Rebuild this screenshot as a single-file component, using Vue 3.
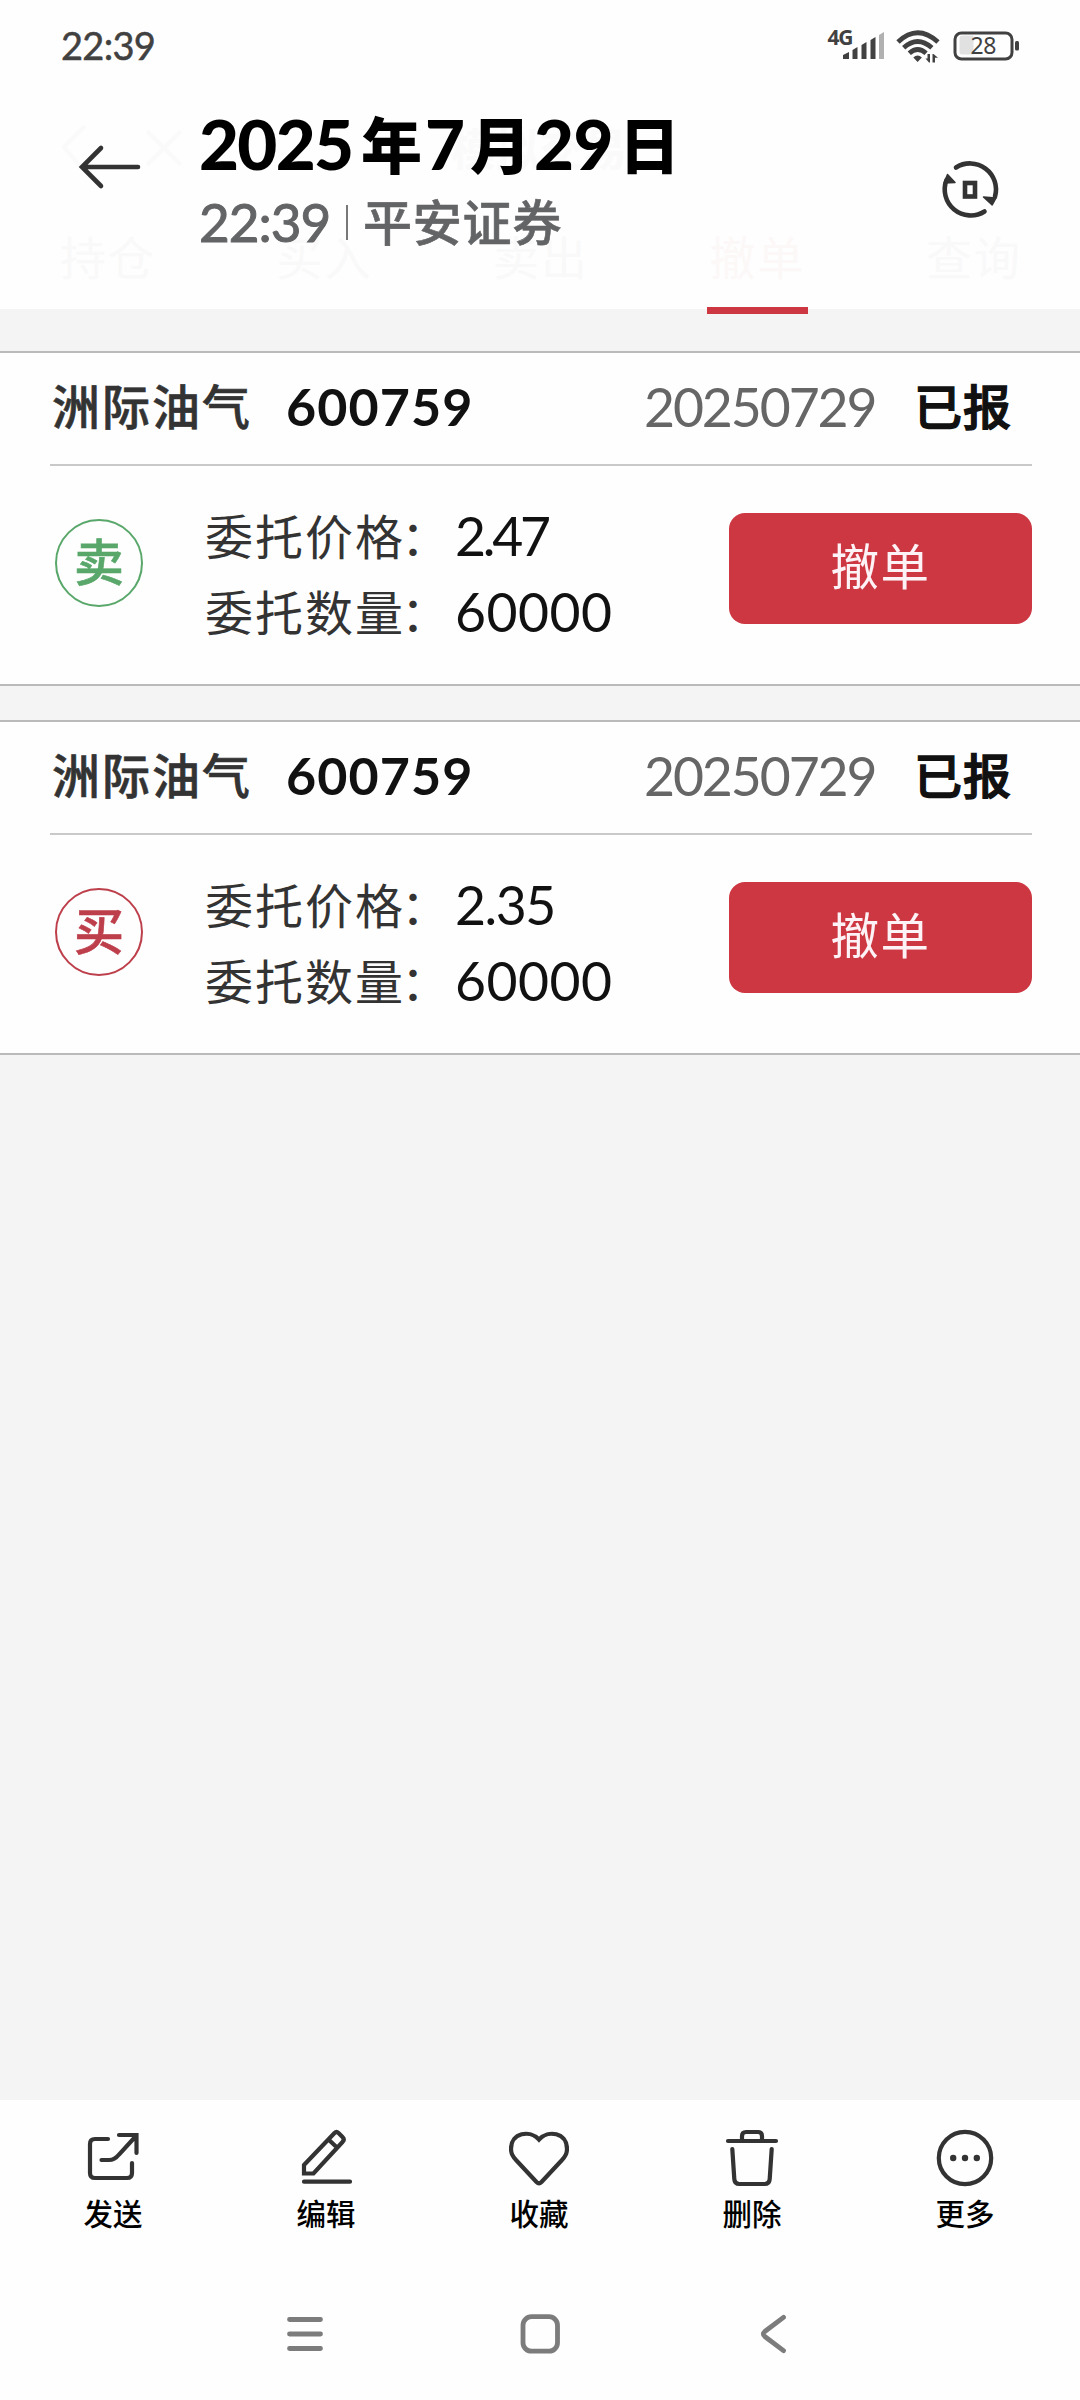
<script setup>
const tabs = ['持仓', '买入', '卖出', '撤单', '查询']
const activeTab = '撤单'

const orders = [
  { id: 1, name: '洲际油气', code: '600759', date: '20250729', status: '已报', side: '卖', kind: 'sell', price: '2.47', amount: '60000', tight: true },
  { id: 2, name: '洲际油气', code: '600759', date: '20250729', status: '已报', side: '买', kind: 'buy', price: '2.35', amount: '60000', tight: false },
]
</script>

<template>
  <div class="screen">
    <header class="app-head">
      <div class="app-bar faint">
        <svg class="app-nav" width="130" height="50" viewBox="0 0 130 50" fill="none" stroke="currentColor" stroke-width="4">
          <path d="M27 8 6 29 22 48M89 13l34 34M123 13 89 47" />
        </svg>
        <span class="app-title">模拟交易</span>
      </div>
      <nav class="tabs">
        <span v-for="t in tabs" :key="t" class="tab" :class="{ active: t === activeTab }">{{ t }}</span>
      </nav>
      <i class="underline"></i>
    </header>

    <main class="orders">
      <section v-for="o in orders" :key="o.id" class="card">
        <div class="card-head">
          <span class="name">{{ o.name }}</span>
          <span class="code">{{ o.code }}</span>
          <span class="date">{{ o.date }}</span>
          <span class="status">{{ o.status }}</span>
        </div>
        <div class="card-body">
          <div class="side" :class="o.kind">{{ o.side }}</div>
          <div class="rows">
            <div class="row">
              <span class="label">委托价格<span class="colon">：</span></span>
              <span class="value price" :class="{ tight: o.tight }">{{ o.price }}</span>
            </div>
            <div class="row">
              <span class="label">委托数量<span class="colon">：</span></span>
              <span class="value">{{ o.amount }}</span>
            </div>
          </div>
          <button class="cancel">撤单</button>
        </div>
      </section>
    </main>

    <footer class="bottom">
      <div class="tools">
        <div class="tool">
          <svg class="ico" viewBox="0 0 60 60">
            <path d="M25 11H12q-5 0-5 5v29q0 5 5 5h32q5 0 5-5V35" />
            <path d="M36 7h17.500v18M18.500 32H26c5 0 8-3 10-5.500L53 8" />
          </svg>
          <span>发送</span>
        </div>
        <div class="tool">
          <svg class="ico" viewBox="1 0 60 60">
            <path d="M9 37 39.500 5q2-2 4 0l4 4q2.500 2.500 0 5L18.500 45.500H9zM33.500 11.500l8.500 8M9 53.700h46" />
          </svg>
          <span>编辑</span>
        </div>
        <div class="tool">
          <svg class="ico" viewBox="0 0 60 60">
            <path d="M30 11.500C21 1.500 2 4.500 2 21c0 4 1.500 7.500 5 11l20.500 22q2.500 2.500 5 0L53 32c3.500-3.500 5-7 5-11C58 4.500 39 1.500 30 11.500z" />
          </svg>
          <span>收藏</span>
        </div>
        <div class="tool">
          <svg class="ico" viewBox="0.500 0 60 60">
            <path d="M6.500 13h48M20.500 12V8q0-4 4-4h12q4 0 4 4v4M10.800 21l2 30q.3 5 5 5h25.400q4.700 0 5-5l2-30" />
          </svg>
          <span>删除</span>
        </div>
        <div class="tool">
          <svg class="ico" viewBox="0 0 60 60">
            <circle cx="30" cy="30" r="26.200" />
            <g fill="#333" stroke="none">
              <circle cx="18.200" cy="30" r="3.200" />
              <circle cx="30" cy="30" r="3.200" />
              <circle cx="41.800" cy="30" r="3.200" />
            </g>
          </svg>
          <span>更多</span>
        </div>
      </div>
      <div class="sysnav">
        <svg viewBox="0 0 48 48"><path d="M8.500 9.500h31M8.500 24h31M8.500 38.500h31" /></svg>
        <svg viewBox="0 0 48 48"><rect x="7" y="6.700" width="34.500" height="34.500" rx="8.500" /></svg>
        <svg viewBox="0 0 48 48"><path d="M33.500 7.300 14.800 21.500q-3 2.500 0 5L33.500 40.700" /></svg>
      </div>
    </footer>

    <div class="overlay">
      <div class="statusbar">
        <span class="clock">22:39</span>
        <svg class="sys" width="205" height="50" viewBox="820 16 205 50">
          <text x="827.500" y="44.500" class="net" textLength="26">4G</text>
          <g fill="#414141">
            <path d="M843 59v-4l6-3v7zM852.500 59V50l5-3v12zM861.500 59V45l5-3v17zM870.500 59V40l5-3v22z" />
            <path fill="#b1b1b1" d="M879 59V35l5-3v27z" />
            <path d="m917.600 62-4.300-4.500q4.300-4 8.600 0z" />
            <path d="M930 54v8.500h-1l-3.500-4h2V54zM935 62.500h-2.500V54h1l4.500 3.800h-3z" />
          </g>
          <g fill="none" stroke="#414141" stroke-width="4.800">
            <path d="M898 42q19.500-18.500 40 0M903.700 47.700q13.800-12.500 28.200 0M909.300 53.300q8.300-7.500 16.800 0" />
          </g>
          <path d="M962 35.500h11.500V54.500H962q-2.500 0-2.500-3v-13q0-3 2.500-3z" fill="#e1e1e1" />
          <rect x="955" y="33" width="57" height="26" rx="6.500" fill="none" stroke="#414141" stroke-width="3" />
          <rect x="1015" y="41" width="4" height="9.500" rx="1.500" fill="#414141" />
          <text x="970.500" y="54" class="bat" textLength="26">28</text>
        </svg>
      </div>
      <div class="titlebar">
        <svg class="back" width="64" height="48" viewBox="0 0 64 48"><path d="M24 5 5 24l19 19M5 24h56" /></svg>
        <div class="titles">
          <h1 class="date-title">
            <b class="n y">2025</b><b class="c">年</b><b class="n m">7</b><b class="c">月</b><b class="n d">29</b><b class="c">日</b>
          </h1>
          <div class="sub">
            <span class="sub-time">22:39</span><i class="sep"></i><span class="sub-app">平安证券</span>
          </div>
        </div>
        <svg class="rotate" width="64" height="64" viewBox="0 0 64 64">
          <path d="M18 9.500A26 26 0 0 1 57 38.500M46.500 53.500A26 26 0 0 1 8.500 22" />
          <rect x="27" y="25" width="10" height="13.500" />
          <path class="solid" d="m45.500 39 12.500 1-3.800 7zM6 25l3.500-8.500 7.500 8z" />
        </svg>
      </div>
    </div>
  </div>
</template>

<style>
body {
  margin: 0;
}
</style>

<style scoped>
.screen {
  position: relative;
  width: 1080px;
  height: 2400px;
  display: flex;
  flex-direction: column;
  overflow: hidden;
  background: #f4f4f4;
  font-family: "Noto Sans CJK SC", sans-serif;
}
.app-head {
  position: relative;
  flex: none;
  box-sizing: border-box;
  height: 309px;
  padding-top: 118px;
  background: #fefefe;
}
.faint {
  color: #fafafa;
}
.app-bar {
  display: flex;
  height: 60px;
  padding-left: 58px;
}
.app-title {
  margin-left: 263px;
  font-size: 44px;
  font-weight: 700;
  line-height: 58px;
}
.tabs {
  display: flex;
  gap: 122.500px;
  padding-left: 60px;
  margin-top: 46px;
}
.tab {
  width: 94px;
  font-size: 46px;
  letter-spacing: 2px;
  line-height: 62px;
  white-space: nowrap;
  color: #f9f9f9;
}
.tab.active {
  color: #fdf8f8;
}
.underline {
  position: absolute;
  left: 707px;
  bottom: -5px;
  width: 101px;
  height: 7px;
  background: #cd3742;
}
.orders {
  flex: 1;
  padding-top: 42px;
}
.card {
  box-sizing: border-box;
  height: 335px;
  margin-bottom: 34px;
  border-top: 2px solid #bababa;
  border-bottom: 2px solid #bababa;
  background: #fefefe;
}
.card-head {
  box-sizing: border-box;
  display: flex;
  height: 113px;
  margin: 0 48px 0 50px;
  padding-left: 2px;
  border-bottom: 2px solid #c9c9c9;
  white-space: nowrap;
}
.name {
  width: 234px;
  font-size: 48px;
  font-weight: 500;
  letter-spacing: 2px;
  line-height: 103px;
  color: #333;
  -webkit-text-stroke: 0.600px #333;
}
.code {
  font-family: Lato, sans-serif;
  font-size: 52px;
  font-weight: 700;
  letter-spacing: 1.100px;
  line-height: 107px;
  color: #111;
}
.date {
  width: 236px;
  margin-left: auto;
  font-family: Lato, sans-serif;
  font-size: 53.500px;
  letter-spacing: -2.100px;
  line-height: 107px;
  color: #666;
}
.status {
  width: 95px;
  margin: 0 23px 0 34px;
  font-size: 48px;
  font-weight: 500;
  letter-spacing: 1px;
  line-height: 103px;
  color: #111;
  -webkit-text-stroke: 1.300px #111;
}
.card-body {
  display: flex;
  align-items: flex-start;
  padding: 0 48px 0 55px;
}
.side {
  box-sizing: border-box;
  flex: none;
  width: 88px;
  height: 88px;
  margin-top: 53px;
  border: 2px solid;
  border-radius: 50%;
  font-size: 50px;
  font-weight: 500;
  line-height: 77px;
  text-align: center;
  -webkit-text-stroke: 0.600px;
}
.sell {
  color: #59a76a;
}
.buy {
  color: #bd3f4b;
}
.rows {
  margin: 29px 0 0 62px;
}
.row {
  display: flex;
  height: 76px;
  white-space: nowrap;
}
.label {
  width: 250px;
  font-size: 48px;
  letter-spacing: 2px;
  line-height: 79px;
  color: #333;
}
.colon {
  margin-left: -4px;
}
.value {
  font-family: Lato, sans-serif;
  font-size: 53.500px;
  letter-spacing: 0.500px;
  line-height: 81px;
  color: #111;
}
.price {
  letter-spacing: -1.500px;
}
.price.tight {
  letter-spacing: -3.200px;
}
.cancel {
  width: 303px;
  height: 111px;
  margin: 47px 0 0 auto;
  padding: 0 0 8px;
  border: 0;
  border-radius: 16px;
  background: #cd3742;
  font-family: inherit;
  font-size: 48.500px;
  letter-spacing: 1.500px;
  line-height: 103px;
  color: #fdf2f5;
}
.bottom {
  flex: none;
  height: 300px;
  background: #fefefe;
}
.tools {
  display: flex;
  padding: 28px 0 0 6.500px;
}
.tool {
  display: flex;
  flex-direction: column;
  align-items: center;
  gap: 4px;
  width: 213px;
  font-size: 29.500px;
  font-weight: 500;
  line-height: 41px;
  color: #000;
}
.ico {
  width: 60px;
  height: 60px;
  fill: none;
  stroke: #333;
  stroke-width: 4.200;
  stroke-linecap: round;
}
.sysnav {
  display: flex;
  justify-content: center;
  gap: 186.500px;
  margin: 77px 1px 0 0;
}
.sysnav svg {
  width: 48px;
  height: 48px;
  fill: none;
  stroke: #7c7c7c;
  stroke-width: 4.800;
  stroke-linecap: round;
}
.overlay {
  position: absolute;
  inset: 0 0 auto;
}
.statusbar {
  display: flex;
  justify-content: space-between;
  height: 66px;
  padding: 16px 55px 0 61px;
  box-sizing: border-box;
}
.clock {
  margin-top: 10px;
  font-family: Lato, sans-serif;
  font-size: 38px;
  letter-spacing: -0.700px;
  line-height: 38px;
  color: #414141;
  -webkit-text-stroke: 0.500px #414141;
}
.net {
  font: 700 21px "Noto Sans", sans-serif;
  fill: #414141;
}
.bat {
  font: 400 23px "Noto Sans", sans-serif;
  fill: #414141;
}
.titlebar {
  display: flex;
  align-items: flex-start;
}
.back {
  margin: 77px 0 0 77px;
  fill: none;
  stroke: #333;
  stroke-width: 4.600;
  stroke-linecap: round;
}
.titles {
  margin: 40px 0 0 58px;
}
.date-title {
  display: flex;
  margin: 0;
  height: 76px;
  color: #000;
  white-space: nowrap;
}
.date-title .n {
  font-family: Lato, sans-serif;
  font-size: 69px;
  letter-spacing: -1.700px;
  line-height: 75px;
}
.date-title .c {
  font-size: 61px;
  line-height: 73px;
}
.y {
  width: 162px;
}
.date-title .m {
  width: 48px;
  text-indent: 3px;
}
.date-title .d {
  width: 88px;
  text-indent: 3px;
  letter-spacing: -0.500px;
}
.sub {
  display: flex;
  height: 76px;
  color: #636466;
  white-space: nowrap;
}
.sub-time {
  width: 147px;
  font-family: Lato, sans-serif;
  font-size: 53px;
  letter-spacing: -1px;
  line-height: 79px;
  -webkit-text-stroke: 1px #636466;
}
.sep {
  width: 2px;
  height: 35px;
  margin: 23px 15px 0 0;
  background: #77787a;
}
.sub-app {
  font-size: 49px;
  font-weight: 500;
  letter-spacing: 0.800px;
  line-height: 76px;
  -webkit-text-stroke: 0.600px #636466;
}
.rotate {
  margin: 92px 78px 0 auto;
  fill: none;
  stroke: #333;
  stroke-width: 4.600;
  stroke-linecap: round;
}
.rotate .solid {
  fill: #333;
  stroke-width: 1.500;
  stroke-linejoin: round;
}
</style>
